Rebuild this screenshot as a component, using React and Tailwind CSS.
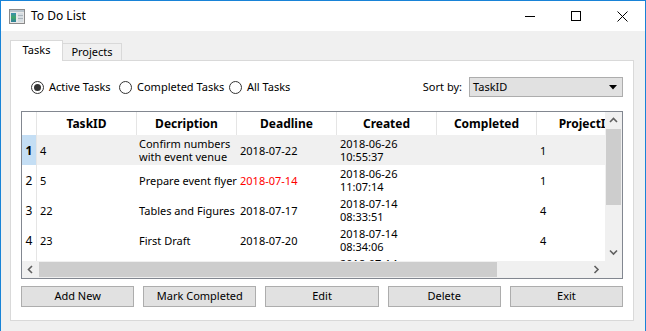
import React from "react";

const rows = [
  { n: "1", id: "4", desc: ["Confirm numbers", "with event venue"], dl: "2018-07-22", red: false, cr: ["2018-06-26", "10:55:37"], pid: "1", sel: true },
  { n: "2", id: "5", desc: ["Prepare event flyer"], dl: "2018-07-14", red: true, cr: ["2018-06-26", "11:07:14"], pid: "1" },
  { n: "3", id: "22", desc: ["Tables and Figures"], dl: "2018-07-17", red: false, cr: ["2018-07-14", "08:33:51"], pid: "4" },
  { n: "4", id: "23", desc: ["First Draft"], dl: "2018-07-20", red: false, cr: ["2018-07-14", "08:34:06"], pid: "4" },
  { n: "5", id: "24", desc: ["Review"], dl: "2018-07-24", red: false, cr: ["2018-07-14", "08:34:20"], pid: "4" },
];

const headers = ["TaskID", "Decription", "Deadline", "Created", "Completed", "ProjectID"];

function Radio({ checked, label, w }) {
  return (
    <div className={`flex items-center ${w}`}>
      <div className="w-[13px] h-[13px] rounded-full border border-[#333] bg-white flex items-center justify-center shrink-0">
        {checked && <div className="w-[7px] h-[7px] rounded-full bg-[#333]" />}
      </div>
      <span className="ml-[5px] whitespace-nowrap">{label}</span>
    </div>
  );
}

function Btn({ children }) {
  return (
    <div className="flex-1 h-[21px] bg-[#e1e1e1] border border-[#adadad] flex items-center justify-center whitespace-nowrap">
      {children}
    </div>
  );
}

function Chevron({ dir }) {
  const paths = {
    up: "M1 5 L4.5 1.5 L8 5",
    down: "M1 1.5 L4.5 5 L8 1.5",
    left: "M5 1 L1.5 4.5 L5 8",
    right: "M1.5 1 L5 4.5 L1.5 8",
  };
  const vert = dir === "up" || dir === "down";
  return (
    <svg width={vert ? 9 : 7} height={vert ? 7 : 9} viewBox={vert ? "0 0 9 7" : "0 0 7 9"}>
      <path d={paths[dir]} fill="none" stroke="#606060" strokeWidth="1.6" />
    </svg>
  );
}

export default function App() {
  return (
    <div
      className="w-[646px] h-[331px] bg-[#f0f0f0] border-x border-t border-[#1883d7] flex flex-col overflow-hidden text-[11px] text-black"
      style={{ fontFamily: '"Noto Sans", "Liberation Sans", sans-serif' }}
    >
      {/* Title bar */}
      <div className="h-[30px] bg-white flex items-center shrink-0">
        <svg className="ml-[8px]" width="16" height="15" viewBox="0 0 16 15">
          <rect x="0.5" y="0.5" width="15" height="14" fill="#e8e8e8" stroke="#8a8a8a" />
          <rect x="1" y="1" width="14" height="2" fill="#b8c4cc" />
          <defs>
            <linearGradient id="g1" x1="0" y1="0" x2="0" y2="1">
              <stop offset="0" stopColor="#3a8fb0" />
              <stop offset="0.5" stopColor="#3da56a" />
              <stop offset="1" stopColor="#2c7f9c" />
            </linearGradient>
          </defs>
          <rect x="2" y="4" width="5" height="9" fill="url(#g1)" />
          <rect x="9" y="4" width="5" height="9" fill="#d6dde2" />
          <rect x="9" y="6" width="5" height="1" fill="#aab5bd" />
          <rect x="9" y="9" width="5" height="1" fill="#aab5bd" />
        </svg>
        <span className="ml-[6px] text-[12px]">To Do List</span>
        <div className="flex-1" />
        <div className="w-[46px] h-full flex items-center justify-center">
          <div className="w-[10px] h-px bg-black" />
        </div>
        <div className="w-[46px] h-full flex items-center justify-center">
          <div className="w-[10px] h-[10px] border border-black" />
        </div>
        <div className="w-[46px] h-full flex items-center justify-center">
          <svg width="11" height="11" viewBox="0 0 11 11">
            <path d="M0.5 0.5 L10.5 10.5 M10.5 0.5 L0.5 10.5" stroke="#000" strokeWidth="1" />
          </svg>
        </div>
      </div>

      {/* Body */}
      <div className="flex-1 pl-[9px] pt-[9px]">
        {/* Tabs */}
        <div className="flex items-end h-[21px] relative z-10">
          <div className="w-[53px] h-[21px] bg-white border border-b-0 border-[#d9d9d9] flex items-center justify-center pb-[1px]">
            Tasks
          </div>
          <div className="w-[59px] h-[18px] bg-[#f0f0f0] border border-l-0 border-[#d9d9d9] flex items-center justify-center">
            Projects
          </div>
        </div>
        {/* Pane */}
        <div className="w-[624px] h-[261px] -mt-px bg-white border border-[#d9d9d9] px-[10px] flex flex-col">
          {/* Filter row */}
          <div className="mt-[16px] h-[20px] flex items-center">
            <div className="w-[10px]" />
            <Radio checked label="Active Tasks" w="w-[88px]" />
            <Radio label="Completed Tasks" w="w-[110px]" />
            <Radio label="All Tasks" w="w-[100px]" />
            <div className="flex-1" />
            <span className="mr-[7px]">Sort by:</span>
            <div className="w-[154px] h-[20px] bg-[#e1e1e1] border border-[#adadad] flex items-center pl-[3px] pr-[5px]">
              <span className="flex-1">TaskID</span>
              <svg width="8" height="5" viewBox="0 0 8 5">
                <path d="M0 0 L8 0 L4 4.5 Z" fill="#000" />
              </svg>
            </div>
          </div>

          {/* Table */}
          <div className="mt-[14px] h-[168px] border border-[#828790] flex flex-col">
            <div className="flex h-[149px]">
              <div className="w-[583px] overflow-hidden">
                <div className="w-[615px]">
                  {/* header */}
                  <div className="flex h-[23px] bg-white">
                    <div className="w-[15px] border-r border-[#e5e5e5]" />
                    {headers.map((h) => (
                      <div key={h} className="w-[100px] shrink-0 border-r border-[#e5e5e5] flex items-center justify-center font-bold text-[12px] whitespace-nowrap">
                        {h}
                      </div>
                    ))}
                  </div>
                  {rows.map((r) => (
                    <div key={r.n} className={`flex h-[30px] leading-[13px] ${r.sel ? "bg-[#f0f0f0]" : "bg-white"}`}>
                      <div className={`w-[15px] shrink-0 border-r border-[#e5e5e5] flex items-center justify-center text-[12px] ${r.sel ? "bg-[#c4def4] font-bold" : "bg-white"}`}>
                        {r.n}
                      </div>
                      <div className="w-[100px] shrink-0 flex items-center pl-[3px]">{r.id}</div>
                      <div className="w-[100px] shrink-0 flex flex-col justify-center pl-[2px] whitespace-nowrap">
                        {r.desc.map((d) => (
                          <span key={d}>{d}</span>
                        ))}
                      </div>
                      <div className={`w-[100px] shrink-0 flex items-center pl-[3px] ${r.red ? "text-[#ff0000]" : ""}`}>{r.dl}</div>
                      <div className="w-[100px] shrink-0 flex flex-col justify-center pl-[3px]">
                        {r.cr.map((d) => (
                          <span key={d}>{d}</span>
                        ))}
                      </div>
                      <div className="w-[100px] shrink-0" />
                      <div className="w-[100px] shrink-0 flex items-center pl-[3px]">{r.pid}</div>
                    </div>
                  ))}
                </div>
              </div>
              {/* vertical scrollbar */}
              <div className="w-[17px] bg-[#f0f0f0] flex flex-col">
                <div className="h-[17px] flex items-center justify-center">
                  <Chevron dir="up" />
                </div>
                <div className="mx-[1px] h-[76px] bg-[#cdcdcd]" />
                <div className="flex-1" />
                <div className="h-[17px] flex items-center justify-center">
                  <Chevron dir="down" />
                </div>
              </div>
            </div>
            {/* horizontal scrollbar */}
            <div className="flex h-[17px] bg-[#f0f0f0]">
              <div className="w-[17px] flex items-center justify-center">
                <Chevron dir="left" />
              </div>
              <div className="w-[458px] my-[1px] bg-[#cdcdcd]" />
              <div className="flex-1" />
              <div className="w-[17px] flex items-center justify-center">
                <Chevron dir="right" />
              </div>
              <div className="w-[17px] bg-[#f0f0f0]" />
            </div>
          </div>

          {/* Buttons */}
          <div className="mt-[7px] flex gap-[9px]">
            <Btn>Add New</Btn>
            <Btn>Mark Completed</Btn>
            <Btn>Edit</Btn>
            <Btn>Delete</Btn>
            <Btn>Exit</Btn>
          </div>
        </div>
      </div>
    </div>
  );
}
